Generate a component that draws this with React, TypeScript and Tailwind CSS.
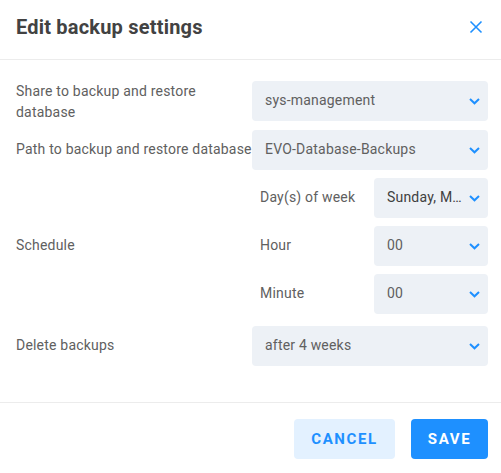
import React from 'react';

const ChevronIcon = () => (
    <svg viewBox="0 0 11 7" className="w-[11px] h-[7px] shrink-0 text-[#1e90ff]" fill="none" stroke="currentColor" strokeWidth="2">
        <path d="M1 1 5.5 5.3 10 1" />
    </svg>
);

const Select: React.FC<{ value: string; className: string; dark?: boolean }> = ({ value, className, dark }) => (
    <div className={`flex items-center justify-between shrink-0 h-10 bg-[#edf1f6] rounded-[4px] pl-[13px] pr-2 ${className}`}>
        <span className={`truncate text-sm tracking-[0.2px] pb-[2px] ${dark ? 'text-[#404040]' : 'text-[#606060]'}`}>{value}</span>
        <ChevronIcon />
    </div>
);

const SubRow: React.FC<{ label: string; value: string; dark?: boolean }> = ({ label, value, dark }) => (
    <div className="flex items-center justify-between pl-2">
        <span className="text-sm tracking-[0.2px] text-[#606060] pb-[2px]">{label}</span>
        <Select value={value} dark={dark} className="w-[114px]" />
    </div>
);

export default function App() {
    return (
        <div className="w-[501px] h-[473px] bg-white flex flex-col font-['Roboto',sans-serif] overflow-hidden">
            <header className="h-[60px] shrink-0 flex items-center justify-between pl-4 pr-[18px] border-b border-[#ececec]">
                <h1 className="text-xl font-bold text-[#424242] tracking-[0.2px] pb-[6px]">Edit backup settings</h1>
                <svg viewBox="0 0 14 14" className="w-[14px] h-[14px] text-[#1e90ff] mb-[5px]" fill="none" stroke="currentColor" strokeWidth="1.6">
                    <path d="M1.5 1.5 12.5 12.5M12.5 1.5 1.5 12.5" />
                </svg>
            </header>

            <div className="flex-1 flex flex-col pt-[21px] pl-4 pr-[13px] text-[#606060]">
                <div className="flex items-center justify-between h-[41px] mb-2">
                    <span className="w-[200px] text-sm leading-[21px] tracking-[0.2px]">Share to backup and restore database</span>
                    <Select value="sys-management" className="w-[236px] self-start" />
                </div>
                <div className="flex items-center justify-between mb-2">
                    <span className="text-sm tracking-[0.2px] whitespace-nowrap pb-[2px]">Path to backup and restore database</span>
                    <Select value="EVO-Database-Backups" className="w-[236px]" />
                </div>
                <div className="flex items-center justify-between mb-3">
                    <span className="text-sm tracking-[0.2px] pb-[2px]">Schedule</span>
                    <div className="w-[236px] flex flex-col gap-2">
                        <SubRow label="Day(s) of week" value="Sunday, Monday" dark />
                        <SubRow label="Hour" value="00" />
                        <SubRow label="Minute" value="00" />
                    </div>
                </div>
                <div className="flex items-center justify-between">
                    <span className="text-sm tracking-[0.2px] pb-[2px]">Delete backups</span>
                    <Select value="after 4 weeks" className="w-[236px]" />
                </div>
            </div>

            <footer className="h-[71px] shrink-0 flex justify-end gap-4 pt-4 pr-[13px] border-t border-[#ececec]">
                <button className="w-[101px] h-10 rounded-[4px] bg-[#e3f1ff] text-[#1e90ff] text-[15px] font-bold tracking-[1.6px]">CANCEL</button>
                <button className="w-[77px] h-10 rounded-[4px] bg-[#1e90ff] text-white text-[15px] font-bold tracking-[1.6px]">SAVE</button>
            </footer>
        </div>
    );
}
